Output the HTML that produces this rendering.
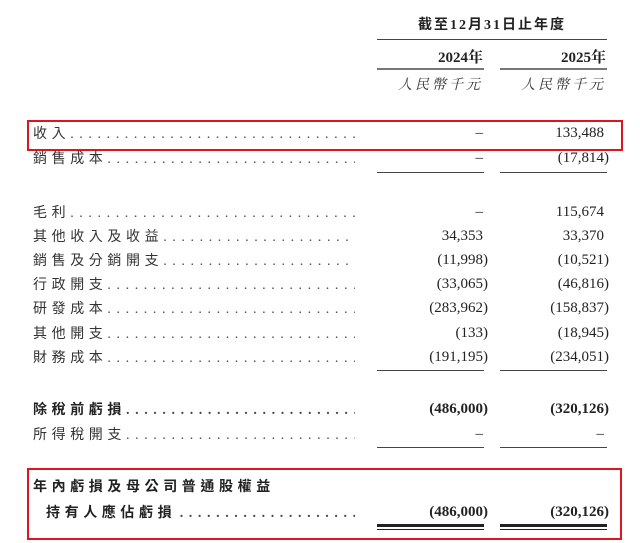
<!DOCTYPE html>
<html><head><meta charset="utf-8"><style>
body{margin:0;width:640px;height:543px;background:#fff;position:relative;overflow:hidden;font-family:"Liberation Serif","Noto Serif CJK SC","Noto Sans CJK TC",serif;color:#222}
.r{position:absolute;left:33px;height:20px;line-height:20px;font-size:14px}
.lab{position:absolute;left:0;top:0;width:322px;white-space:nowrap;overflow:hidden;color:#333}
.lab span.t{letter-spacing:4.6px;font-family:"Noto Sans CJK TC","Noto Sans CJK SC",sans-serif;font-weight:400}
.lab span.d{letter-spacing:5.6px;color:#444}
.n{position:absolute;top:0;text-align:right;font-size:15px;white-space:nowrap}
.c1{left:306px;width:144px}
.c2{left:426px;width:145px}
.p{margin-right:-5px}
.b{font-weight:bold}
.b .lab span.t{font-weight:700;color:#222}
.ln{position:absolute;height:1px;background:#444}
.box{position:absolute;border:2px solid #e0141e}
</style></head><body>
<div style="position:absolute;left:377px;width:230px;top:14px;text-align:center;font-size:14px;font-weight:bold;letter-spacing:2px;font-family:'Liberation Serif','Noto Sans CJK TC',serif">截至12月31日止年度</div>
<div class="ln" style="left:377px;width:230px;top:39px"></div>
<div style="position:absolute;left:377px;width:106px;top:46px;text-align:right;font-size:15px;font-weight:bold">2024年</div>
<div style="position:absolute;left:500px;width:106px;top:46px;text-align:right;font-size:15px;font-weight:bold">2025年</div>
<div class="ln" style="left:377px;width:107px;top:68px;height:2px;background:#777"></div>
<div class="ln" style="left:500px;width:107px;top:68px;height:2px;background:#777"></div>
<div style="position:absolute;left:377px;width:106px;top:74px;text-align:right;font-size:14px;font-style:italic;letter-spacing:3px;color:#333">人民幣千元</div>
<div style="position:absolute;left:500px;width:106px;top:74px;text-align:right;font-size:14px;font-style:italic;letter-spacing:3px;color:#333">人民幣千元</div>

<div class="box" style="left:27px;top:120px;width:592px;height:27px"></div>
<div class="box" style="left:27px;top:468px;width:591px;height:68px"></div>

<div class="r" style="top:123px"><div class="lab"><span class="t">收入</span><span class="d">..........................................</span></div><div class="n c1">–</div><div class="n c2">133,488</div></div>
<div class="r" style="top:148px"><div class="lab"><span class="t">銷售成本</span><span class="d">..........................................</span></div><div class="n c1">–</div><div class="n c2"><span class="p">(17,814)</span></div></div>
<div class="ln" style="left:377px;width:107px;top:172px"></div>
<div class="ln" style="left:500px;width:107px;top:172px"></div>

<div class="r" style="top:202px"><div class="lab"><span class="t">毛利</span><span class="d">..........................................</span></div><div class="n c1">–</div><div class="n c2">115,674</div></div>
<div class="r" style="top:226px"><div class="lab"><span class="t">其他收入及收益</span><span class="d">..........................................</span></div><div class="n c1">34,353</div><div class="n c2">33,370</div></div>
<div class="r" style="top:250px"><div class="lab"><span class="t">銷售及分銷開支</span><span class="d">..........................................</span></div><div class="n c1"><span class="p">(11,998)</span></div><div class="n c2"><span class="p">(10,521)</span></div></div>
<div class="r" style="top:274px"><div class="lab"><span class="t">行政開支</span><span class="d">..........................................</span></div><div class="n c1"><span class="p">(33,065)</span></div><div class="n c2"><span class="p">(46,816)</span></div></div>
<div class="r" style="top:298px"><div class="lab"><span class="t">研發成本</span><span class="d">..........................................</span></div><div class="n c1"><span class="p">(283,962)</span></div><div class="n c2"><span class="p">(158,837)</span></div></div>
<div class="r" style="top:323px"><div class="lab"><span class="t">其他開支</span><span class="d">..........................................</span></div><div class="n c1"><span class="p">(133)</span></div><div class="n c2"><span class="p">(18,945)</span></div></div>
<div class="r" style="top:347px"><div class="lab"><span class="t">財務成本</span><span class="d">..........................................</span></div><div class="n c1"><span class="p">(191,195)</span></div><div class="n c2"><span class="p">(234,051)</span></div></div>
<div class="ln" style="left:377px;width:107px;top:370px"></div>
<div class="ln" style="left:500px;width:107px;top:370px"></div>

<div class="r b" style="top:399px"><div class="lab"><span class="t">除稅前虧損</span><span class="d">..........................................</span></div><div class="n c1"><span class="p">(486,000)</span></div><div class="n c2"><span class="p">(320,126)</span></div></div>
<div class="r" style="top:424px"><div class="lab"><span class="t">所得稅開支</span><span class="d">..........................................</span></div><div class="n c1">–</div><div class="n c2">–</div></div>
<div class="ln" style="left:377px;width:107px;top:447px"></div>
<div class="ln" style="left:500px;width:107px;top:447px"></div>

<div class="r b" style="top:476px"><div class="lab"><span class="t">年內虧損及母公司普通股權益</span></div></div>
<div class="r b" style="top:502px"><div class="lab" style="left:13px;width:309px"><span class="t">持有人應佔虧損</span> <span class="d">..........................................</span></div><div class="n c1"><span class="p">(486,000)</span></div><div class="n c2"><span class="p">(320,126)</span></div></div>
<div class="ln" style="left:377px;width:107px;top:524px;height:3px;background:#222"></div>
<div class="ln" style="left:500px;width:107px;top:524px;height:3px;background:#222"></div>
<div class="ln" style="left:377px;width:107px;top:529px;height:1px;background:#222"></div>
<div class="ln" style="left:500px;width:107px;top:529px;height:1px;background:#222"></div>
</body></html>
